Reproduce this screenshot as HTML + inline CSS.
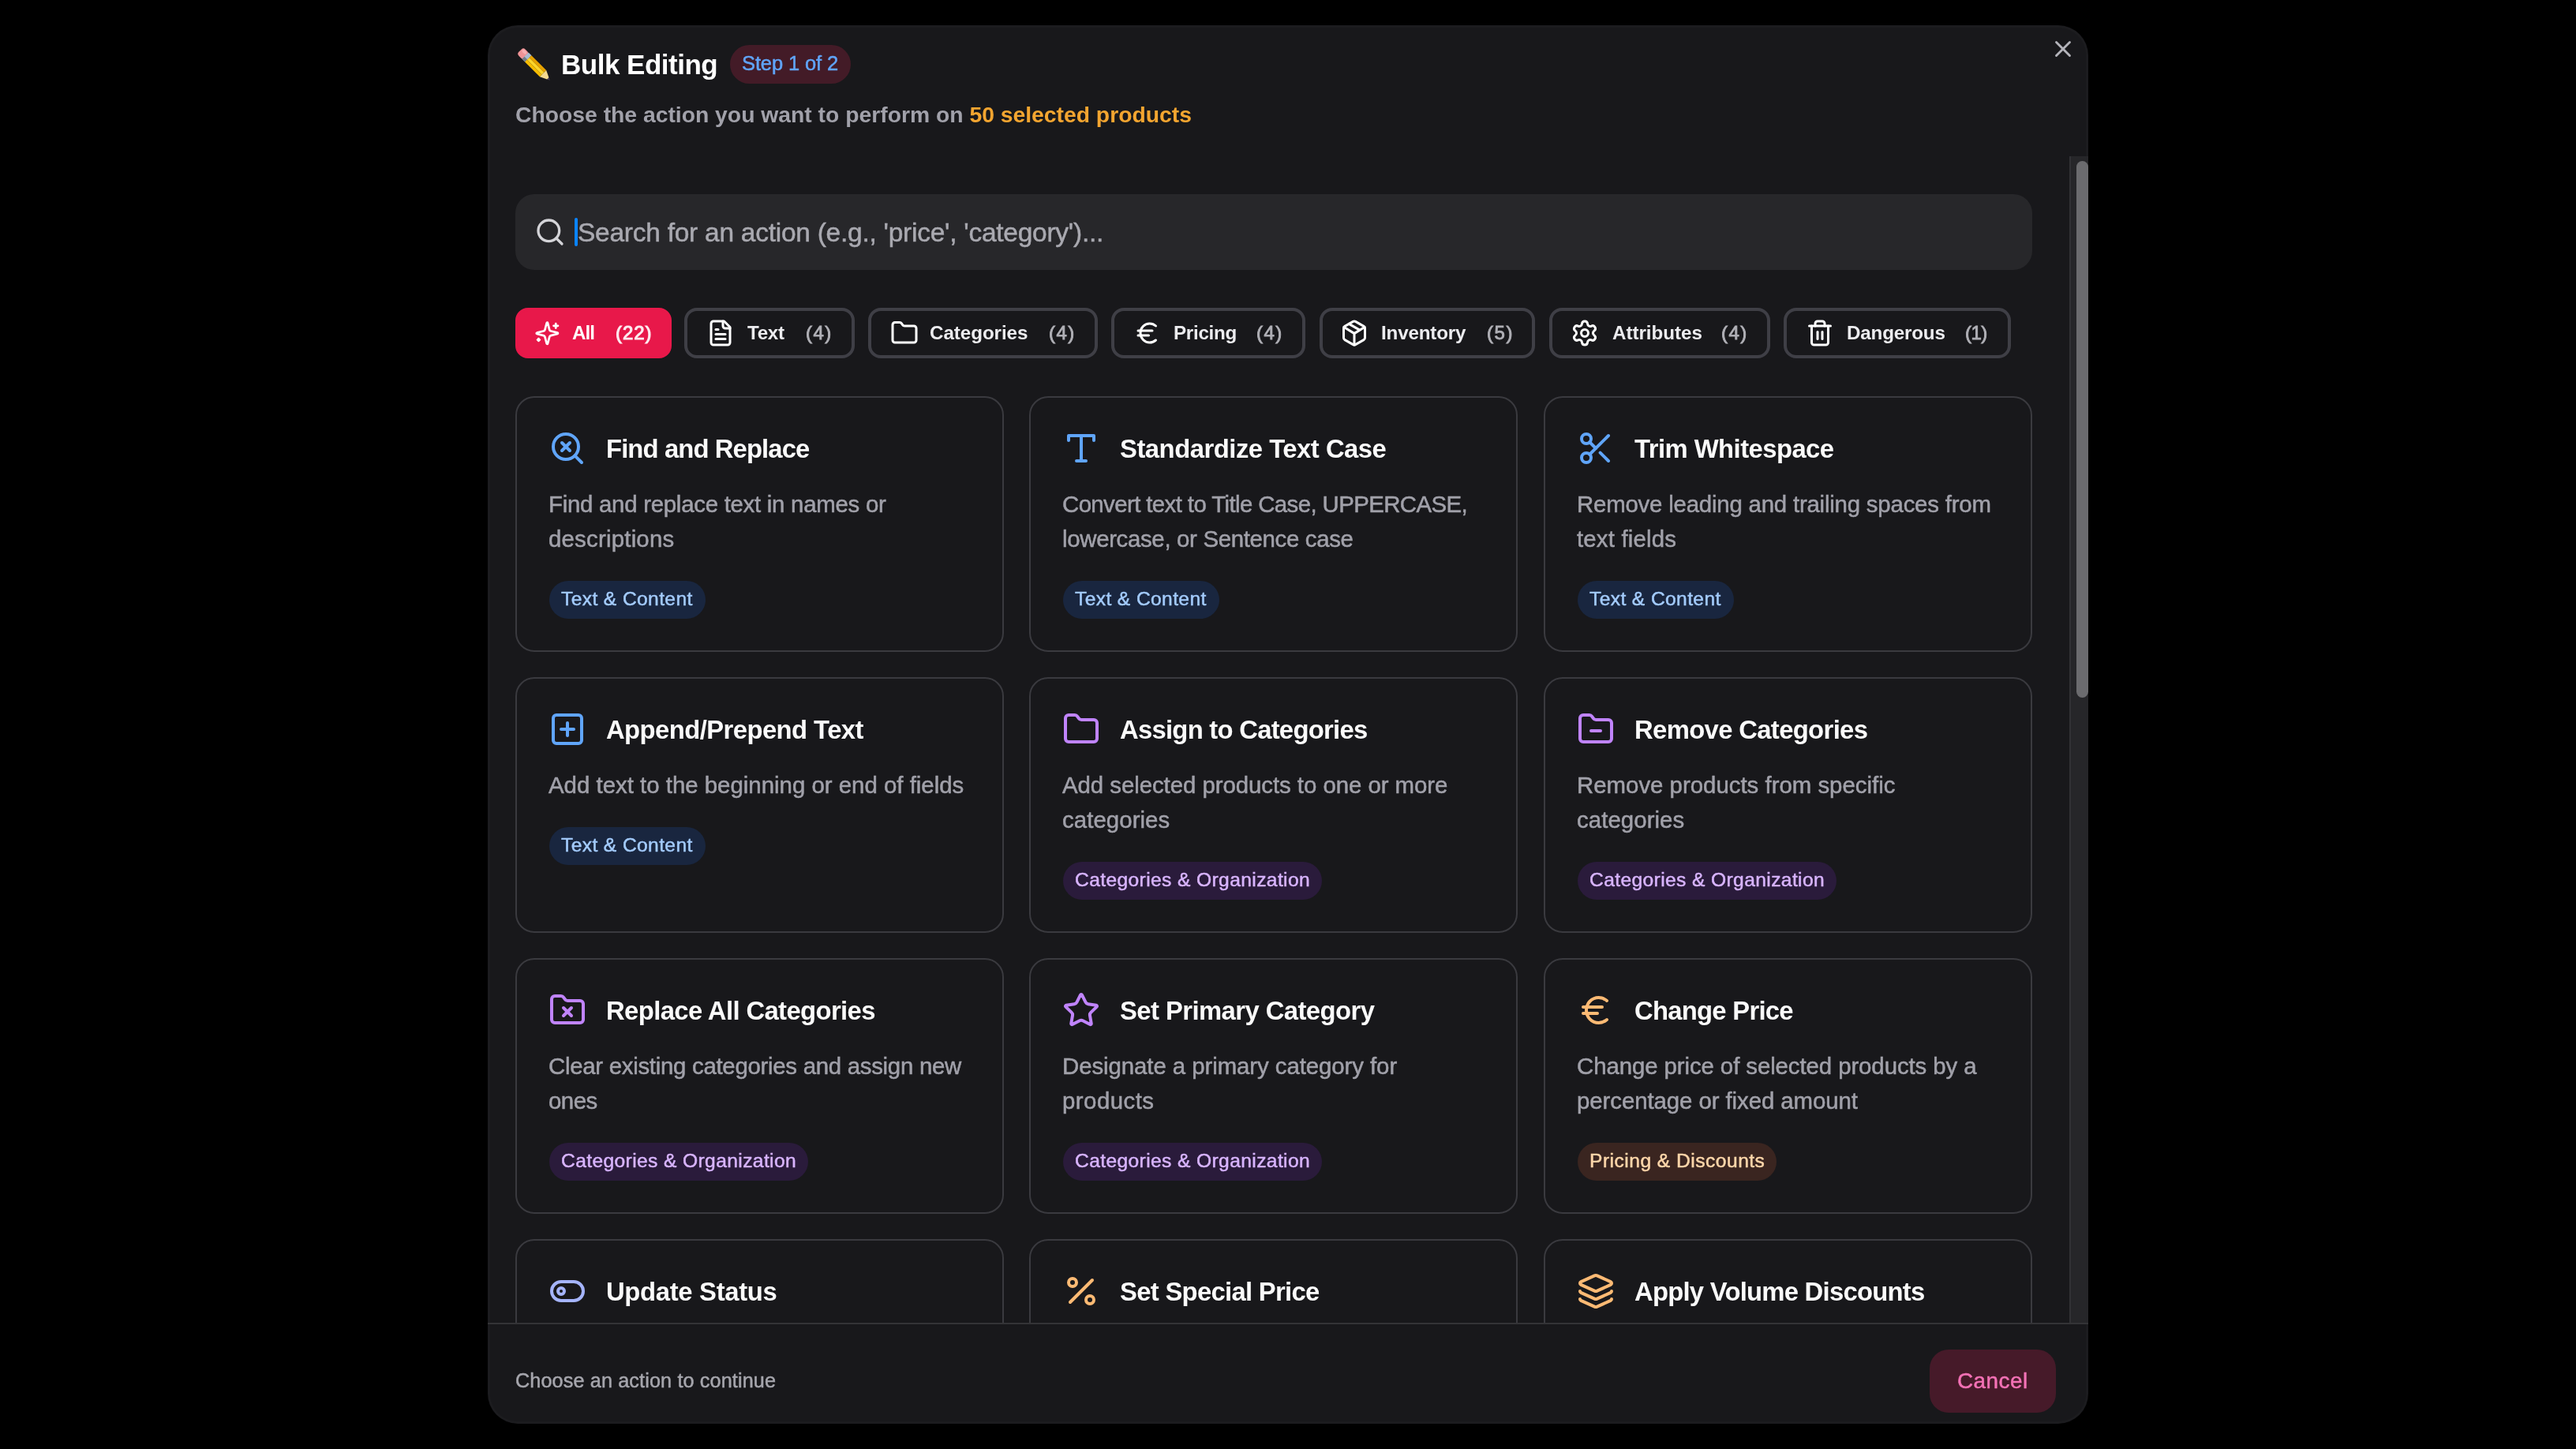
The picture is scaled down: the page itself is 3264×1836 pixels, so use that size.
<!DOCTYPE html>
<html><head><meta charset="utf-8"><title>Bulk Editing</title>
<style>
html,body{margin:0;padding:0;background:#000;width:3264px;height:1836px;overflow:hidden}
body{font-family:"Liberation Sans",sans-serif;position:relative}
.t{position:absolute;white-space:nowrap;line-height:1;will-change:transform}
.r{-webkit-text-stroke-width:0.5px}
.ic{position:absolute;overflow:visible}
.modal{position:absolute;left:618px;top:32px;width:2028px;height:1772px;background:#18181b;border-radius:38px;overflow:hidden;box-shadow:inset 0 0 0 3px rgba(255,255,255,0.02)}
.abs{position:absolute}
.scroll{position:absolute;left:0;top:166px;width:2028px;height:1479px;overflow:hidden}
.tab{position:absolute;top:192px;height:64px;box-sizing:border-box;border:4px solid #3f3f46;border-radius:16px;background:#18181b}
.card{position:absolute;width:619px;height:324px;box-sizing:border-box;border:2px solid #3a3a3f;border-radius:24px;background:#18181b}
.tag{position:absolute;height:48px;border-radius:24px}
</style></head><body>

<div class="modal"></div>
<svg class="abs" style="left:646px;top:51px;filter:blur(0.45px)" width="62" height="62" viewBox="646 51 62 62">
<g transform="translate(677.9 83) rotate(45) scale(0.97)">
<rect x="-27.5" y="-6" width="11" height="12" rx="3.5" fill="#ef9396"/>
<rect x="-26" y="-4.8" width="7" height="4" rx="2" fill="#f6b0b2"/>
<rect x="-18" y="-6" width="5.5" height="12" fill="#a8bcd2"/>
<rect x="-18" y="1.5" width="5.5" height="4.5" fill="#767c86"/>
<rect x="-12.7" y="-6" width="27.5" height="4" fill="#e8a300"/>
<rect x="-12.7" y="-2" width="27.5" height="4.2" fill="#fdd52a"/>
<rect x="-12.7" y="2.2" width="27.5" height="3.8" fill="#f8bd00"/>
<polygon points="14.8,-6 14.8,6 24,1.6 24,-1.6" fill="#f6da90"/>
<polygon points="24,-1.6 24,1.6 27.5,0" fill="#4a3f5c"/>
</g></svg>
<div class="t" style="left:711.0px;top:64.4px;font-size:35px;font-weight:700;color:#ffffff;letter-spacing:-0.498px;">Bulk Editing</div>
<div class="abs" style="left:925px;top:57px;width:153px;height:49px;border-radius:25px;background:#431b27"></div>
<div class="t r" style="left:940.0px;top:68.4px;font-size:25.5px;font-weight:400;color:#60a5fa;letter-spacing:-0.116px;">Step 1 of 2</div>
<svg class="ic" style="left:2597.0px;top:45.0px" width="34" height="34" viewBox="0 0 24 24" fill="none" stroke="#b4b4bb" stroke-width="2" stroke-linecap="round" stroke-linejoin="round"><path d="M18 6 6 18"/><path d="m6 6 12 12"/></svg>
<div class="t" style="left:653px;top:131.0px;font-size:28.3px;font-weight:700;color:#a1a1aa">Choose the action you want to perform on <span style="color:#f3a530">50 selected products</span></div>
<div class="abs" style="left:618px;top:198px;width:2005px;height:1479px;overflow:hidden">
<div class="abs" style="left:35px;top:48px;width:1922px;height:96px;border-radius:24px;background:#27272a"></div>
<svg class="ic" style="left:58.7px;top:75.7px" width="40" height="40" viewBox="0 0 24 24" fill="none" stroke="#d4d4d8" stroke-width="2" stroke-linecap="round" stroke-linejoin="round"><circle cx="11" cy="11" r="8"/><path d="m21 21-4.3-4.3"/></svg>
<div class="abs" style="left:110px;top:78px;width:4px;height:36px;border-radius:2px;background:#0a84ff"></div>
<div class="t r" style="left:114.0px;top:79.6px;font-size:33.5px;font-weight:400;color:#a9a9b0;letter-spacing:-0.257px;">Search for an action (e.g., 'price', 'category')...</div>
<div class="tab" style="left:35px;width:198px;background:#e8184a;border-color:#e8184a"></div>
<svg class="ic" style="left:58.6px;top:207.6px" width="32.7" height="32.7" viewBox="0 0 24 24" fill="none" stroke="#ffffff" stroke-width="2" stroke-linecap="round" stroke-linejoin="round"><path d="M9.937 15.5A2 2 0 0 0 8.5 14.063l-6.135-1.582a.5.5 0 0 1 0-.962L8.5 9.936A2 2 0 0 0 9.937 8.5l1.582-6.135a.5.5 0 0 1 .963 0L14.063 8.5A2 2 0 0 0 15.5 9.937l6.135 1.581a.5.5 0 0 1 0 .964L15.5 14.063a2 2 0 0 0-1.437 1.437l-1.582 6.135a.5.5 0 0 1-.963 0z"/><path d="M20 3v4"/><path d="M22 5h-4"/><path d="M4 17v2"/><path d="M5 18H3"/></svg>
<div class="t" style="left:106.5px;top:211.5px;font-size:24.2px;font-weight:700;color:#ffffff;letter-spacing:-0.944px;">All</div>
<div class="t r" style="left:162.0px;top:212.0px;font-size:24px;font-weight:400;color:rgba(255,255,255,0.85);letter-spacing:0.971px;-webkit-text-stroke-width:1.1px">(22)</div>
<div class="tab" style="left:249px;width:216px"></div>
<svg class="ic" style="left:276.9px;top:206.0px" width="36" height="36" viewBox="0 0 24 24" fill="none" stroke="#ffffff" stroke-width="2" stroke-linecap="round" stroke-linejoin="round"><path d="M15 2H6a2 2 0 0 0-2 2v16a2 2 0 0 0 2 2h12a2 2 0 0 0 2-2V7Z"/><path d="M14 2v4a2 2 0 0 0 2 2h4"/><path d="M10 9H8"/><path d="M16 13H8"/><path d="M16 17H8"/></svg>
<div class="t" style="left:328.5px;top:211.5px;font-size:24.2px;font-weight:700;color:#ececef;letter-spacing:-0.294px;">Text</div>
<div class="t r" style="left:402.5px;top:212.0px;font-size:24px;font-weight:400;color:#b0b0b6;letter-spacing:1.480px;-webkit-text-stroke-width:0.9px">(4)</div>
<div class="tab" style="left:481.5px;width:291.5px"></div>
<svg class="ic" style="left:509.5px;top:206.0px" width="36" height="36" viewBox="0 0 24 24" fill="none" stroke="#ffffff" stroke-width="2" stroke-linecap="round" stroke-linejoin="round"><path d="M20 20a2 2 0 0 0 2-2V8a2 2 0 0 0-2-2h-7.9a2 2 0 0 1-1.69-.9L9.6 3.9A2 2 0 0 0 7.93 3H4a2 2 0 0 0-2 2v13a2 2 0 0 0 2 2Z"/></svg>
<div class="t" style="left:559.5px;top:211.5px;font-size:24.2px;font-weight:700;color:#ececef;letter-spacing:-0.062px;">Categories</div>
<div class="t r" style="left:711.0px;top:212.0px;font-size:24px;font-weight:400;color:#b0b0b6;letter-spacing:1.480px;-webkit-text-stroke-width:0.9px">(4)</div>
<div class="tab" style="left:790px;width:246px"></div>
<svg class="ic" style="left:818.0px;top:206.0px" width="36" height="36" viewBox="0 0 24 24" fill="none" stroke="#ffffff" stroke-width="2" stroke-linecap="round" stroke-linejoin="round"><path d="M4 10h12"/><path d="M4 14h9"/><path d="M19 6a7.7 7.7 0 0 0-5.2-2A7.9 7.9 0 0 0 6 12c0 4.4 3.5 8 7.8 8 2 0 3.8-.8 5.2-2"/></svg>
<div class="t" style="left:869.0px;top:211.5px;font-size:24.2px;font-weight:700;color:#ececef;letter-spacing:-0.285px;">Pricing</div>
<div class="t r" style="left:974.0px;top:212.0px;font-size:24px;font-weight:400;color:#b0b0b6;letter-spacing:1.480px;-webkit-text-stroke-width:0.9px">(4)</div>
<div class="tab" style="left:1053.5px;width:273.5px"></div>
<svg class="ic" style="left:1080.3px;top:206.0px" width="36" height="36" viewBox="0 0 24 24" fill="none" stroke="#ffffff" stroke-width="2" stroke-linecap="round" stroke-linejoin="round"><path d="M11 21.73a2 2 0 0 0 2 0l7-4A2 2 0 0 0 21 16V8a2 2 0 0 0-1-1.73l-7-4a2 2 0 0 0-2 0l-7 4A2 2 0 0 0 3 8v8a2 2 0 0 0 1 1.73z"/><path d="M12 22V12"/><path d="m3.3 7 7.703 4.734a2 2 0 0 0 1.994 0L20.7 7"/><path d="m7.5 4.27 9 5.15"/></svg>
<div class="t" style="left:1131.5px;top:211.5px;font-size:24.2px;font-weight:700;color:#ececef;letter-spacing:-0.177px;">Inventory</div>
<div class="t r" style="left:1265.5px;top:212.0px;font-size:24px;font-weight:400;color:#b0b0b6;letter-spacing:1.580px;-webkit-text-stroke-width:0.9px">(5)</div>
<div class="tab" style="left:1345px;width:280px"></div>
<svg class="ic" style="left:1371.6px;top:206.0px" width="36" height="36" viewBox="0 0 24 24" fill="none" stroke="#ffffff" stroke-width="2" stroke-linecap="round" stroke-linejoin="round"><path d="M9.671 4.136a2.34 2.34 0 0 1 4.659 0 2.34 2.34 0 0 0 3.319 1.915 2.34 2.34 0 0 1 2.33 4.033 2.34 2.34 0 0 0 0 3.831 2.34 2.34 0 0 1-2.33 4.033 2.34 2.34 0 0 0-3.319 1.915 2.34 2.34 0 0 1-4.659 0 2.34 2.34 0 0 0-3.32-1.915 2.34 2.34 0 0 1-2.33-4.033 2.34 2.34 0 0 0 0-3.831A2.34 2.34 0 0 1 6.35 6.051a2.34 2.34 0 0 0 3.319-1.915"/><circle cx="12" cy="12" r="3"/></svg>
<div class="t" style="left:1424.5px;top:211.5px;font-size:24.2px;font-weight:700;color:#ececef;letter-spacing:-0.030px;">Attributes</div>
<div class="t r" style="left:1563.0px;top:212.0px;font-size:24px;font-weight:400;color:#b0b0b6;letter-spacing:1.480px;-webkit-text-stroke-width:0.9px">(4)</div>
<div class="tab" style="left:1642px;width:287.5px"></div>
<svg class="ic" style="left:1669.5px;top:206.0px" width="36" height="36" viewBox="0 0 24 24" fill="none" stroke="#ffffff" stroke-width="2" stroke-linecap="round" stroke-linejoin="round"><path d="M10 11v6"/><path d="M14 11v6"/><path d="M19 6v14a2 2 0 0 1-2 2H7a2 2 0 0 1-2-2V6"/><path d="M3 6h18"/><path d="M8 6V4a2 2 0 0 1 2-2h4a2 2 0 0 1 2 2v2"/></svg>
<div class="t" style="left:1721.7px;top:211.5px;font-size:24.2px;font-weight:700;color:#ececef;letter-spacing:-0.185px;">Dangerous</div>
<div class="t r" style="left:1872.0px;top:212.0px;font-size:24px;font-weight:400;color:#b0b0b6;letter-spacing:-0.570px;-webkit-text-stroke-width:0.9px">(1)</div>
<div class="card" style="left:35px;top:304px"></div>
<svg class="ic" style="left:76.5px;top:346.0px" width="48" height="48" viewBox="0 0 24 24" fill="none" stroke="#60a5fa" stroke-width="2" stroke-linecap="round" stroke-linejoin="round"><path d="m13.5 8.5-5 5"/><path d="m8.5 8.5 5 5"/><circle cx="11" cy="11" r="8"/><path d="m21 21-4.3-4.3"/></svg>
<div class="t" style="left:149.5px;top:354.7px;font-size:32.8px;font-weight:700;color:#fafafa;letter-spacing:-0.886px;">Find and Replace</div>
<div class="t r" style="left:77.0px;top:425.6px;font-size:29.4px;font-weight:400;color:#a1a1aa;letter-spacing:-0.263px;">Find and replace text in names or</div>
<div class="t r" style="left:77.0px;top:469.6px;font-size:29.4px;font-weight:400;color:#a1a1aa;letter-spacing:0.215px;">descriptions</div>
<div class="tag" style="left:78px;top:538.0px;width:198px;background:#19263f"></div>
<div class="t r" style="left:93.0px;top:549.0px;font-size:24.6px;font-weight:400;color:#a3cbfc;letter-spacing:0.386px;">Text &amp; Content</div>
<div class="card" style="left:686px;top:304px"></div>
<svg class="ic" style="left:727.5px;top:346.0px" width="48" height="48" viewBox="0 0 24 24" fill="none" stroke="#60a5fa" stroke-width="2" stroke-linecap="round" stroke-linejoin="round"><polyline points="4 7 4 4 20 4 20 7"/><line x1="9" x2="15" y1="20" y2="20"/><line x1="12" x2="12" y1="4" y2="20"/></svg>
<div class="t" style="left:800.5px;top:354.7px;font-size:32.8px;font-weight:700;color:#fafafa;letter-spacing:-0.484px;">Standardize Text Case</div>
<div class="t r" style="left:728.0px;top:425.6px;font-size:29.4px;font-weight:400;color:#a1a1aa;letter-spacing:-0.598px;">Convert text to Title Case, UPPERCASE,</div>
<div class="t r" style="left:728.0px;top:469.6px;font-size:29.4px;font-weight:400;color:#a1a1aa;letter-spacing:-0.325px;">lowercase, or Sentence case</div>
<div class="tag" style="left:729px;top:538.0px;width:198px;background:#19263f"></div>
<div class="t r" style="left:744.0px;top:549.0px;font-size:24.6px;font-weight:400;color:#a3cbfc;letter-spacing:0.386px;">Text &amp; Content</div>
<div class="card" style="left:1338px;top:304px"></div>
<svg class="ic" style="left:1379.5px;top:346.0px" width="48" height="48" viewBox="0 0 24 24" fill="none" stroke="#60a5fa" stroke-width="2" stroke-linecap="round" stroke-linejoin="round"><circle cx="6" cy="6" r="3"/><path d="M8.12 8.12 12 12"/><path d="M20 4 8.12 15.88"/><circle cx="6" cy="18" r="3"/><path d="M14.8 14.8 20 20"/></svg>
<div class="t" style="left:1452.5px;top:354.7px;font-size:32.8px;font-weight:700;color:#fafafa;letter-spacing:-0.542px;">Trim Whitespace</div>
<div class="t r" style="left:1380.0px;top:425.6px;font-size:29.4px;font-weight:400;color:#a1a1aa;letter-spacing:-0.202px;">Remove leading and trailing spaces from</div>
<div class="t r" style="left:1380.0px;top:469.6px;font-size:29.4px;font-weight:400;color:#a1a1aa;letter-spacing:0.175px;">text fields</div>
<div class="tag" style="left:1381px;top:538.0px;width:198px;background:#19263f"></div>
<div class="t r" style="left:1396.0px;top:549.0px;font-size:24.6px;font-weight:400;color:#a3cbfc;letter-spacing:0.386px;">Text &amp; Content</div>
<div class="card" style="left:35px;top:660px"></div>
<svg class="ic" style="left:76.5px;top:702.0px" width="48" height="48" viewBox="0 0 24 24" fill="none" stroke="#60a5fa" stroke-width="2" stroke-linecap="round" stroke-linejoin="round"><rect width="18" height="18" x="3" y="3" rx="2"/><path d="M8 12h8"/><path d="M12 8v8"/></svg>
<div class="t" style="left:149.5px;top:710.7px;font-size:32.8px;font-weight:700;color:#fafafa;letter-spacing:-0.560px;">Append/Prepend Text</div>
<div class="t r" style="left:77.0px;top:781.6px;font-size:29.4px;font-weight:400;color:#a1a1aa;letter-spacing:0.004px;">Add text to the beginning or end of fields</div>
<div class="tag" style="left:78px;top:850.0px;width:198px;background:#19263f"></div>
<div class="t r" style="left:93.0px;top:861.0px;font-size:24.6px;font-weight:400;color:#a3cbfc;letter-spacing:0.386px;">Text &amp; Content</div>
<div class="card" style="left:686px;top:660px"></div>
<svg class="ic" style="left:727.5px;top:702.0px" width="48" height="48" viewBox="0 0 24 24" fill="none" stroke="#c084fc" stroke-width="2" stroke-linecap="round" stroke-linejoin="round"><path d="M20 20a2 2 0 0 0 2-2V8a2 2 0 0 0-2-2h-7.9a2 2 0 0 1-1.69-.9L9.6 3.9A2 2 0 0 0 7.93 3H4a2 2 0 0 0-2 2v13a2 2 0 0 0 2 2Z"/></svg>
<div class="t" style="left:800.5px;top:710.7px;font-size:32.8px;font-weight:700;color:#fafafa;letter-spacing:-0.731px;">Assign to Categories</div>
<div class="t r" style="left:728.0px;top:781.6px;font-size:29.4px;font-weight:400;color:#a1a1aa;letter-spacing:-0.051px;">Add selected products to one or more</div>
<div class="t r" style="left:728.0px;top:825.6px;font-size:29.4px;font-weight:400;color:#a1a1aa;letter-spacing:0.066px;">categories</div>
<div class="tag" style="left:729px;top:894.0px;width:328px;background:#2a1b3b"></div>
<div class="t r" style="left:744.0px;top:905.0px;font-size:24.6px;font-weight:400;color:#d8b4fe;letter-spacing:0.385px;">Categories &amp; Organization</div>
<div class="card" style="left:1338px;top:660px"></div>
<svg class="ic" style="left:1379.5px;top:702.0px" width="48" height="48" viewBox="0 0 24 24" fill="none" stroke="#c084fc" stroke-width="2" stroke-linecap="round" stroke-linejoin="round"><path d="M9 13h6"/><path d="M20 20a2 2 0 0 0 2-2V8a2 2 0 0 0-2-2h-7.9a2 2 0 0 1-1.69-.9L9.6 3.9A2 2 0 0 0 7.93 3H4a2 2 0 0 0-2 2v13a2 2 0 0 0 2 2Z"/></svg>
<div class="t" style="left:1452.5px;top:710.7px;font-size:32.8px;font-weight:700;color:#fafafa;letter-spacing:-0.643px;">Remove Categories</div>
<div class="t r" style="left:1380.0px;top:781.6px;font-size:29.4px;font-weight:400;color:#a1a1aa;letter-spacing:-0.002px;">Remove products from specific</div>
<div class="t r" style="left:1380.0px;top:825.6px;font-size:29.4px;font-weight:400;color:#a1a1aa;letter-spacing:0.066px;">categories</div>
<div class="tag" style="left:1381px;top:894.0px;width:328px;background:#2a1b3b"></div>
<div class="t r" style="left:1396.0px;top:905.0px;font-size:24.6px;font-weight:400;color:#d8b4fe;letter-spacing:0.385px;">Categories &amp; Organization</div>
<div class="card" style="left:35px;top:1016px"></div>
<svg class="ic" style="left:76.5px;top:1058.0px" width="48" height="48" viewBox="0 0 24 24" fill="none" stroke="#c084fc" stroke-width="2" stroke-linecap="round" stroke-linejoin="round"><path d="M20 20a2 2 0 0 0 2-2V8a2 2 0 0 0-2-2h-7.9a2 2 0 0 1-1.69-.9L9.6 3.9A2 2 0 0 0 7.93 3H4a2 2 0 0 0-2 2v13a2 2 0 0 0 2 2Z"/><path d="m9.5 10.5 5 5"/><path d="m14.5 10.5-5 5"/></svg>
<div class="t" style="left:149.5px;top:1066.7px;font-size:32.8px;font-weight:700;color:#fafafa;letter-spacing:-0.609px;">Replace All Categories</div>
<div class="t r" style="left:77.0px;top:1137.6px;font-size:29.4px;font-weight:400;color:#a1a1aa;letter-spacing:-0.282px;">Clear existing categories and assign new</div>
<div class="t r" style="left:77.0px;top:1181.6px;font-size:29.4px;font-weight:400;color:#a1a1aa;letter-spacing:-0.479px;">ones</div>
<div class="tag" style="left:78px;top:1250.0px;width:328px;background:#2a1b3b"></div>
<div class="t r" style="left:93.0px;top:1261.0px;font-size:24.6px;font-weight:400;color:#d8b4fe;letter-spacing:0.385px;">Categories &amp; Organization</div>
<div class="card" style="left:686px;top:1016px"></div>
<svg class="ic" style="left:727.5px;top:1058.0px" width="48" height="48" viewBox="0 0 24 24" fill="none" stroke="#c084fc" stroke-width="2" stroke-linecap="round" stroke-linejoin="round"><path d="M11.525 2.295a.53.53 0 0 1 .95 0l2.31 4.679a2.123 2.123 0 0 0 1.595 1.16l5.166.756a.53.53 0 0 1 .294.904l-3.736 3.638a2.123 2.123 0 0 0-.611 1.878l.882 5.14a.53.53 0 0 1-.771.56l-4.618-2.428a2.122 2.122 0 0 0-1.973 0L6.396 21.01a.53.53 0 0 1-.77-.56l.881-5.139a2.122 2.122 0 0 0-.611-1.879L2.16 9.795a.53.53 0 0 1 .294-.906l5.165-.755a2.122 2.122 0 0 0 1.597-1.16z"/></svg>
<div class="t" style="left:800.5px;top:1066.7px;font-size:32.8px;font-weight:700;color:#fafafa;letter-spacing:-0.560px;">Set Primary Category</div>
<div class="t r" style="left:728.0px;top:1137.6px;font-size:29.4px;font-weight:400;color:#a1a1aa;letter-spacing:-0.070px;">Designate a primary category for</div>
<div class="t r" style="left:728.0px;top:1181.6px;font-size:29.4px;font-weight:400;color:#a1a1aa;letter-spacing:0.467px;">products</div>
<div class="tag" style="left:729px;top:1250.0px;width:328px;background:#2a1b3b"></div>
<div class="t r" style="left:744.0px;top:1261.0px;font-size:24.6px;font-weight:400;color:#d8b4fe;letter-spacing:0.385px;">Categories &amp; Organization</div>
<div class="card" style="left:1338px;top:1016px"></div>
<svg class="ic" style="left:1379.5px;top:1058.0px" width="48" height="48" viewBox="0 0 24 24" fill="none" stroke="#fdba74" stroke-width="2" stroke-linecap="round" stroke-linejoin="round"><path d="M4 10h12"/><path d="M4 14h9"/><path d="M19 6a7.7 7.7 0 0 0-5.2-2A7.9 7.9 0 0 0 6 12c0 4.4 3.5 8 7.8 8 2 0 3.8-.8 5.2-2"/></svg>
<div class="t" style="left:1452.5px;top:1066.7px;font-size:32.8px;font-weight:700;color:#fafafa;letter-spacing:-0.734px;">Change Price</div>
<div class="t r" style="left:1380.0px;top:1137.6px;font-size:29.4px;font-weight:400;color:#a1a1aa;letter-spacing:-0.086px;">Change price of selected products by a</div>
<div class="t r" style="left:1380.0px;top:1181.6px;font-size:29.4px;font-weight:400;color:#a1a1aa;letter-spacing:-0.074px;">percentage or fixed amount</div>
<div class="tag" style="left:1381px;top:1250.0px;width:251.5px;background:#3a2520"></div>
<div class="t r" style="left:1396.0px;top:1261.0px;font-size:24.6px;font-weight:400;color:#fed7aa;letter-spacing:0.482px;">Pricing &amp; Discounts</div>
<div class="card" style="left:35px;top:1372px"></div>
<svg class="ic" style="left:76.5px;top:1414.0px" width="48" height="48" viewBox="0 0 24 24" fill="none" stroke="#a5b4fc" stroke-width="2" stroke-linecap="round" stroke-linejoin="round"><rect width="20" height="12" x="2" y="6" rx="6" ry="6"/><circle cx="8" cy="12" r="2"/></svg>
<div class="t" style="left:149.5px;top:1422.7px;font-size:32.8px;font-weight:700;color:#fafafa;letter-spacing:-0.313px;">Update Status</div>
<div class="t r" style="left:77.0px;top:1493.6px;font-size:29.4px;font-weight:400;color:#a1a1aa;letter-spacing:0.0px;">Enable or disable selected products</div>
<div class="t r" style="left:77.0px;top:1537.6px;font-size:29.4px;font-weight:400;color:#a1a1aa;letter-spacing:0.0px;">in bulk</div>
<div class="tag" style="left:78px;top:1606.0px;width:120px;background:#1e1f3d"></div>
<div class="t r" style="left:93.0px;top:1617.0px;font-size:24.6px;font-weight:400;color:#c7d2fe;letter-spacing:0.0px;">Status</div>
<div class="card" style="left:686px;top:1372px"></div>
<svg class="ic" style="left:727.5px;top:1414.0px" width="48" height="48" viewBox="0 0 24 24" fill="none" stroke="#fdba74" stroke-width="2" stroke-linecap="round" stroke-linejoin="round"><line x1="19" x2="5" y1="5" y2="19"/><circle cx="6.5" cy="6.5" r="2.5"/><circle cx="17.5" cy="17.5" r="2.5"/></svg>
<div class="t" style="left:800.5px;top:1422.7px;font-size:32.8px;font-weight:700;color:#fafafa;letter-spacing:-0.688px;">Set Special Price</div>
<div class="t r" style="left:728.0px;top:1493.6px;font-size:29.4px;font-weight:400;color:#a1a1aa;letter-spacing:0.0px;">Set a special price for a limited</div>
<div class="t r" style="left:728.0px;top:1537.6px;font-size:29.4px;font-weight:400;color:#a1a1aa;letter-spacing:0.0px;">time period</div>
<div class="tag" style="left:729px;top:1606.0px;width:251.5px;background:#3a2520"></div>
<div class="t r" style="left:744.0px;top:1617.0px;font-size:24.6px;font-weight:400;color:#fed7aa;letter-spacing:0.482px;">Pricing &amp; Discounts</div>
<div class="card" style="left:1338px;top:1372px"></div>
<svg class="ic" style="left:1379.5px;top:1414.0px" width="48" height="48" viewBox="0 0 24 24" fill="none" stroke="#fdba74" stroke-width="2" stroke-linecap="round" stroke-linejoin="round"><path d="M12.83 2.18a2 2 0 0 0-1.66 0L2.6 6.08a1 1 0 0 0 0 1.83l8.58 3.91a2 2 0 0 0 1.66 0l8.58-3.9a1 1 0 0 0 0-1.83z"/><path d="M2 12a1 1 0 0 0 .58.91l8.6 3.91a2 2 0 0 0 1.65 0l8.58-3.9A1 1 0 0 0 22 12"/><path d="M2 17a1 1 0 0 0 .58.91l8.6 3.91a2 2 0 0 0 1.65 0l8.58-3.9A1 1 0 0 0 22 17"/></svg>
<div class="t" style="left:1452.5px;top:1422.7px;font-size:32.8px;font-weight:700;color:#fafafa;letter-spacing:-0.750px;">Apply Volume Discounts</div>
<div class="t r" style="left:1380.0px;top:1493.6px;font-size:29.4px;font-weight:400;color:#a1a1aa;letter-spacing:0.0px;">Configure tiered pricing based on</div>
<div class="t r" style="left:1380.0px;top:1537.6px;font-size:29.4px;font-weight:400;color:#a1a1aa;letter-spacing:0.0px;">quantity</div>
<div class="tag" style="left:1381px;top:1606.0px;width:251.5px;background:#3a2520"></div>
<div class="t r" style="left:1396.0px;top:1617.0px;font-size:24.6px;font-weight:400;color:#fed7aa;letter-spacing:0.482px;">Pricing &amp; Discounts</div>
</div>
<div class="abs" style="left:2622px;top:198px;width:24px;height:1479px;background:#262629;border-left:2px solid #313135;box-sizing:border-box"></div>
<div class="abs" style="left:2631px;top:204px;width:15px;height:680px;border-radius:8px;background:#6b6b6e"></div>
<div class="abs" style="left:618px;top:1676px;width:2028px;height:2px;background:#333336"></div>
<div class="t r" style="left:653.0px;top:1736.7px;font-size:25.2px;font-weight:400;color:#a6a6ad;letter-spacing:0.138px;">Choose an action to continue</div>
<div class="abs" style="left:2445px;top:1710px;width:160px;height:80px;border-radius:24px;background:#461a29"></div>
<div class="t r" style="left:2480.0px;top:1736.4px;font-size:27.9px;font-weight:400;color:#f472b6;letter-spacing:0.476px;">Cancel</div>
</body></html>
